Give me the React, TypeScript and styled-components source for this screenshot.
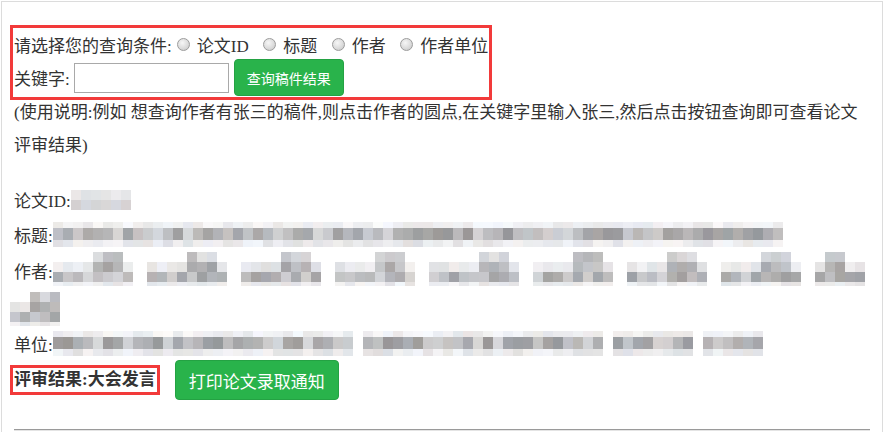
import React from 'react';
import styled, { createGlobalStyle } from 'styled-components';

const GlobalStyle = createGlobalStyle`
  html, body {
    margin: 0;
    padding: 0;
    background: #fff;
  }
  body {
    font-family: "Liberation Serif", "Noto Sans CJK SC", serif;
    color: #333;
  }
`;

type RowSpec = { h: number; lo: number; hi: number; sup?: boolean; under?: boolean };

const makeRand = (seed: number) => {
  let s = seed;
  return () => {
    s = (s * 9301 + 49297) % 233280;
    return s / 233280;
  };
};

const tone = (r: () => number, lo: number, hi: number) => {
  const l = lo + (hi - lo) * r();
  const warm = (r() - 0.5) * 8;
  const clamp = (v: number) => Math.max(0, Math.min(255, Math.round(v)));
  return `rgb(${clamp(l + warm)},${clamp(l + (r() - 0.5) * 4)},${clamp(l - warm + 2)})`;
};

// blurred (pixelated) text, one 10px cell per column
const Mosaic = ({ cols, rows, seed, sup = [], $shift = 0 }: { cols: number; rows: RowSpec[]; seed: number; sup?: number[]; $shift?: number }) => {
  const r = makeRand(seed);
  const cells: React.ReactNode[] = [];
  rows.forEach((row, ri) => {
    for (let c = 0; c < cols; c++) {
      let color = tone(r, row.lo, row.hi);
      if (row.sup) color = sup.includes(c) ? tone(r, 182, 226) : 'transparent';
      if (row.under && sup.includes(c)) color = tone(r, 160, 200);
      cells.push(<Cell key={`${ri}-${c}`} style={{ background: color }} />);
    }
  });
  return (
    <Grid $cols={cols} $rows={rows.map((x) => `${x.h}px`).join(' ')} $shift={$shift}>
      {cells}
    </Grid>
  );
};

const ID_ROWS: RowSpec[] = [
  { h: 10, lo: 224, hi: 236 },
  { h: 10, lo: 206, hi: 220 },
];
const TITLE_ROWS: RowSpec[] = [
  { h: 6, lo: 230, hi: 250 },
  { h: 12, lo: 150, hi: 218 },
  { h: 7, lo: 222, hi: 246 },
];
const AUTHOR_ROWS: RowSpec[] = [
  { h: 10, lo: 0, hi: 0, sup: true },
  { h: 10, lo: 222, hi: 242, under: true },
  { h: 10, lo: 158, hi: 215 },
  { h: 4, lo: 226, hi: 246 },
];

const authorSegs = [8, 8, 8, 8, 9, 8, 8, 8, 5];
const unitSegs = [30, 24, 8, 6];

const App = () => {
  return (
    <>
      <GlobalStyle />
      <Panel>
        <SearchBox>
          <QueryRow>
            <Prompt>请选择您的查询条件:</Prompt>
            {['论文ID', '标题', '作者', '作者单位'].map((opt) => (
              <Option key={opt}>
                <Radio type="radio" name="cond" />
                {opt}
              </Option>
            ))}
          </QueryRow>
          <KeywordRow>
            <Prompt>关键字:</Prompt>
            <Keyword type="text" />
            <SearchButton>查询稿件结果</SearchButton>
          </KeywordRow>
        </SearchBox>

        <Usage>
          (使用说明:例如 想查询作者有张三的稿件,则点击作者的圆点,在关键字里输入张三,然后点击按钮查询即可查看论文评审结果)
        </Usage>

        <Results>
          <Line $h={35}>
            <Prompt>论文ID:</Prompt>
            <Mosaic cols={6} rows={ID_ROWS} seed={11} />
          </Line>
          <Line $h={35}>
            <Prompt>标题:</Prompt>
            <Mosaic cols={73} rows={TITLE_ROWS} seed={23} />
          </Line>
          <Line $h={37}>
            <Prompt>作者:</Prompt>
            <Segments $gap={14}>
              {authorSegs.map((n, i) => (
                <Mosaic
                  key={i}
                  cols={n}
                  rows={AUTHOR_ROWS}
                  seed={101 + i * 37}
                  sup={n > 5 ? [n - 4, n - 3, n - 2] : [1, 2]}
                  $shift={4}
                />
              ))}
            </Segments>
          </Line>
          <Line $h={37}>
            <Wrapped>
              <Mosaic cols={5} rows={AUTHOR_ROWS} seed={577} sup={[2, 3, 4]} />
            </Wrapped>
          </Line>
          <Line $h={35}>
            <Prompt>单位:</Prompt>
            <Segments $gap={10}>
              {unitSegs.map((n, i) => (
                <Mosaic key={i} cols={n} rows={TITLE_ROWS} seed={301 + i * 53} />
              ))}
            </Segments>
          </Line>
          <VerdictRow>
            <Verdict>评审结果:大会发言</Verdict>
            <PrintButton>打印论文录取通知</PrintButton>
          </VerdictRow>
        </Results>

        <Divider />
      </Panel>
    </>
  );
};

const Panel = styled.div`
  box-sizing: border-box;
  width: 882px;
  margin: 1px 0 0 1px;
  padding: 27px 12px 0;
  border: 1px solid #dcdcdc;
  border-bottom: none;
  font-size: 17px;
  min-height: 431px;
`;

const SearchBox = styled.div`
  width: fit-content;
  outline: 3px solid #f23a3a;
  outline-offset: 1px;
`;

const QueryRow = styled.div`
  display: flex;
  align-items: center;
  height: 30px;
`;

const KeywordRow = styled.div`
  display: flex;
  align-items: center;
  height: 37px;
`;

const Prompt = styled.span`
  flex-shrink: 0;
  white-space: nowrap;
`;

const Option = styled.label`
  display: flex;
  align-items: center;
  white-space: nowrap;
  margin-right: 9.5px;

  &:last-child {
    margin-right: 0;
  }
`;

const Radio = styled.input`
  appearance: none;
  width: 13px;
  height: 13px;
  margin: 0 7px 0 5px;
  border: 1px solid #9c9c9c;
  border-radius: 50%;
  box-sizing: border-box;
  background: radial-gradient(circle at 40% 35%, #f6f6f6 0%, #dcdcdc 55%, #c2c2c2 100%);
`;

const Keyword = styled.input`
  box-sizing: border-box;
  width: 155px;
  height: 30px;
  margin-left: 4px;
  border: 1px solid #a9a9a9;
  padding: 2px 4px;
  background: #fff;
`;

const SearchButton = styled.button`
  height: 37px;
  margin-left: 5px;
  padding: 0 12px;
  border: 1px solid #24a243;
  border-radius: 4px;
  background: #29b34b;
  color: #fff;
  font-family: "Noto Sans CJK SC", sans-serif;
  font-size: 14px;
`;

const Usage = styled.p`
  margin: 0;
  line-height: 33px;
`;

const Results = styled.div`
  margin-top: 20px;
`;

const Line = styled.div<{ $h: number }>`
  display: flex;
  align-items: center;
  height: ${(p) => p.$h}px;
`;

const Segments = styled.div<{ $gap: number }>`
  display: flex;
  align-items: center;
  gap: ${(p) => p.$gap}px;
`;

const Wrapped = styled.div`
  display: flex;
  margin-left: -4px;
  margin-top: 2px;
`;

const Grid = styled.div<{ $cols: number; $rows: string; $shift: number }>`
  display: grid;
  flex-shrink: 0;
  grid-template-columns: repeat(${(p) => p.$cols}, 10px);
  grid-template-rows: ${(p) => p.$rows};
  margin-bottom: ${(p) => p.$shift}px;
`;

const Cell = styled.span`
  display: block;
`;

const VerdictRow = styled.div`
  display: flex;
  align-items: center;
  height: 38px;
`;

const Verdict = styled.span`
  font-weight: 700;
  line-height: 22px;
  white-space: nowrap;
  outline: 3px solid #f23a3a;
  outline-offset: 1px;
`;

const PrintButton = styled.button`
  height: 40px;
  margin-left: 19px;
  padding: 0 13px;
  border: 1px solid #24a243;
  border-radius: 4px;
  background: #29b34b;
  color: #fff;
  font-family: "Noto Sans CJK SC", sans-serif;
  font-size: 17px;
`;

const Divider = styled.hr`
  margin: 30px 0 0;
  border: 0;
  border-top: 1px solid #9a9a9a;
  border-bottom: 1px solid #e4e4e4;
`;

export default App;
